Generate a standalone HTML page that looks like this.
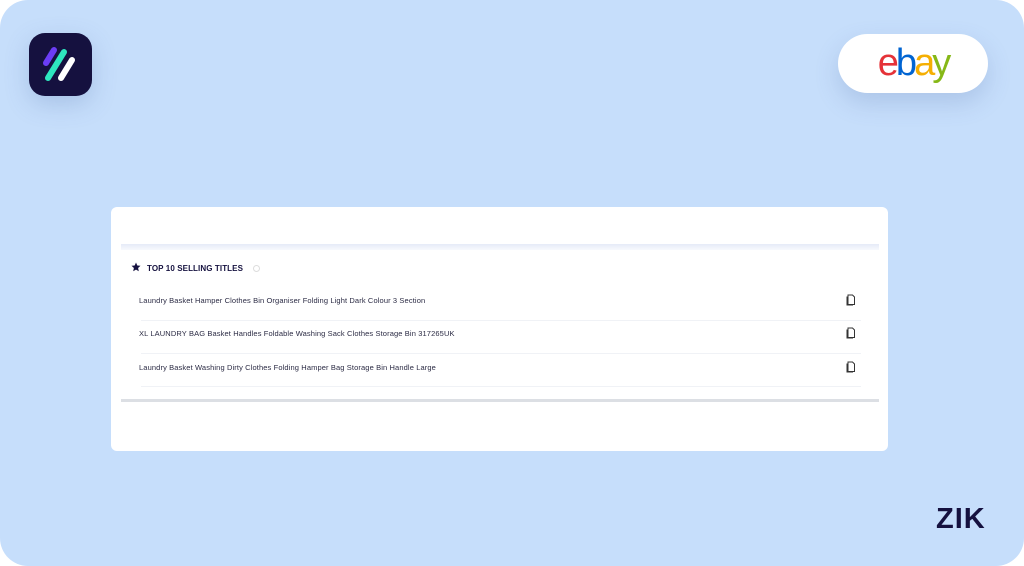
<!DOCTYPE html>
<html><head><meta charset="utf-8"><style>
*{margin:0;padding:0;box-sizing:border-box}
body{width:1024px;height:566px;background:#fff;overflow:hidden;font-family:"Liberation Sans",sans-serif;position:relative}
.bg{position:absolute;left:0;top:0;width:1024px;height:566px;background:#c6defb;border-radius:28px}
.app{position:absolute;left:29px;top:33px;width:63px;height:63px;background:#15113f;border-radius:16px;box-shadow:0 8px 24px rgba(80,110,170,.25)}
.ebay{position:absolute;left:838px;top:34px;width:150px;height:59px;background:#fff;border-radius:30px;box-shadow:0 10px 24px rgba(80,110,170,.22);text-align:center;font-size:38px;line-height:58px;letter-spacing:-3px;font-family:"Liberation Sans",sans-serif}
.card{position:absolute;left:111px;top:207px;width:777px;height:244px;background:#fff;border-radius:6px}
.band{position:absolute;left:10px;top:37px;width:758px;height:6px;background:linear-gradient(#e6ebf7,#f7f9fd)}
.bot{position:absolute;left:10px;top:192px;width:758px;height:3px;background:#dcdfe4}
.hdr{position:absolute;left:20px;top:55px;font-size:8px;font-weight:bold;color:#15113f;letter-spacing:.1px}
.row{position:absolute;left:28px;font-size:7.5px;color:#2b2b44;letter-spacing:.12px}
.line{position:absolute;left:30px;width:720px;height:1px;background:#f0f2f6}
.cp{position:absolute;left:735px;width:10px;height:12px}
.zik{position:absolute;left:936px;top:503px;font-size:29px;font-weight:bold;color:#15113f;letter-spacing:1px}
</style></head><body>
<div class="bg"></div>
<div class="app"><svg width="63" height="63" viewBox="0 0 63 63"><g stroke-linecap="round" stroke-width="6"><line x1="17" y1="30" x2="25" y2="17" stroke="#6b3df5"/><line x1="19" y1="45" x2="35" y2="19" stroke="#2ee6bf"/><line x1="32" y1="45" x2="43" y2="27" stroke="#fff"/></g></svg></div>
<div class="ebay"><span style="color:#e53238">e</span><span style="color:#0064d2">b</span><span style="color:#f5af02">a</span><span style="color:#86b817">y</span></div>
<div class="card">
<div class="band"></div>
<div class="hdr"><svg width="10" height="10" viewBox="0 0 10 10" style="vertical-align:-1px;margin-right:6px"><path d="M5 0.5L6.3 3.5 9.5 3.8 7.1 6 7.8 9.3 5 7.6 2.2 9.3 2.9 6 0.5 3.8 3.7 3.5Z" fill="#15113f"/></svg>TOP 10 SELLING TITLES <span style="display:inline-block;width:7px;height:7px;border:1px solid #ddd;border-radius:50%;margin-left:8px;vertical-align:-1px"></span></div>
<div class="row" style="top:89px">Laundry Basket Hamper Clothes Bin Organiser Folding Light Dark Colour 3 Section</div>
<div class="line" style="top:113px"></div>
<div class="row" style="top:122px">XL LAUNDRY BAG Basket Handles Foldable Washing Sack Clothes Storage Bin 317265UK</div>
<div class="line" style="top:146px"></div>
<div class="row" style="top:156px">Laundry Basket Washing Dirty Clothes Folding Hamper Bag Storage Bin Handle Large</div>
<div class="line" style="top:179px"></div>
<svg class="cp" style="top:87px" viewBox="0 0 10 12"><path d="M2 1h4.5l2 2v7.5h-6.5z M1 2.5v8.5h6" fill="none" stroke="#333" stroke-width="1"/></svg>
<svg class="cp" style="top:120px" viewBox="0 0 10 12"><path d="M2 1h4.5l2 2v7.5h-6.5z M1 2.5v8.5h6" fill="none" stroke="#333" stroke-width="1"/></svg>
<svg class="cp" style="top:154px" viewBox="0 0 10 12"><path d="M2 1h4.5l2 2v7.5h-6.5z M1 2.5v8.5h6" fill="none" stroke="#333" stroke-width="1"/></svg>
<div class="bot"></div>
</div>
<div class="zik">ZIK</div>
</body></html>
